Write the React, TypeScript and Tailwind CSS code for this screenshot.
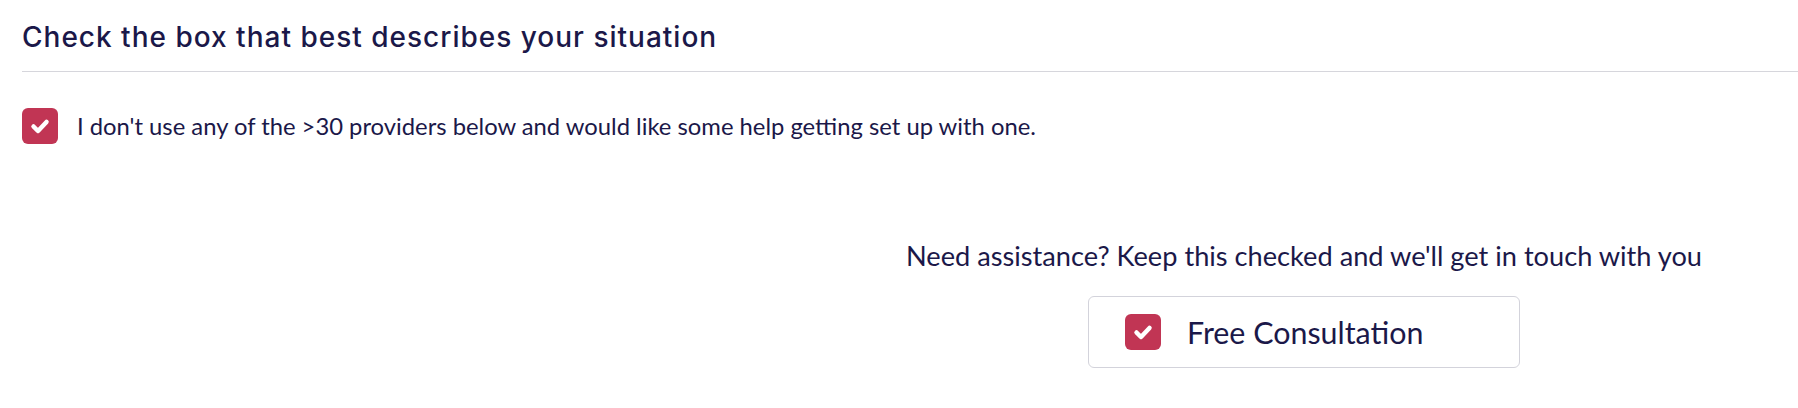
import React from 'react'

const ink = 'text-[#1b1849]'

function CheckBox() {
  return (
    <span className="flex h-[36px] w-[36px] shrink-0 items-center justify-center rounded-[6px] bg-[#c13554]">
      <svg viewBox="0 0 36 36" className="h-[36px] w-[36px]" fill="none">
        <polyline
          points="11.5,18.5 16,23 24.5,14"
          stroke="#ffffff"
          strokeWidth="4.5"
          strokeLinecap="round"
          strokeLinejoin="round"
        />
      </svg>
    </span>
  )
}

export default function App() {
  return (
    <div className="min-h-[408px] w-full bg-white pl-[22px] font-['Lato',sans-serif]">
      {/* Heading */}
      <div className="border-b border-[#d6d6dc] pt-[20px] pb-[17px]">
        <h2 className={`font-['Inter',sans-serif] text-[28px] leading-[34px] font-medium tracking-[1px] ${ink}`}>
          Check the box that best describes your situation
        </h2>
      </div>

      {/* Situation option */}
      <label className="mt-[36px] flex items-center gap-[19px]">
        <CheckBox />
        <span className={`text-[23.8px] leading-[36px] ${ink}`}>
          I don't use any of the &gt;30 providers below and would like some help getting set up with one.
        </span>
      </label>

      {/* Consultation */}
      <div className="flex justify-end pb-[40px]">
        <div className="flex w-[988px] flex-col items-center">
          <p className={`mt-[94px] text-[27.2px] leading-[36px] ${ink}`}>
            Need assistance? Keep this checked and we'll get in touch with you
          </p>
          <button className="mt-[22px] flex h-[72px] w-[432px] items-center gap-[26px] rounded-[6px] border border-[#d3d3db] bg-white px-[36px]">
            <CheckBox />
            <span className={`text-[30.4px] leading-[36px] ${ink}`}>Free Consultation</span>
          </button>
        </div>
      </div>
    </div>
  )
}
